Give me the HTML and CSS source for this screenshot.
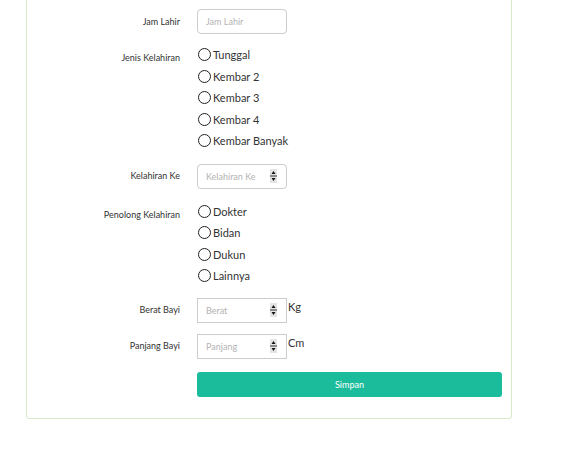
FILE: index.html
```html
<!DOCTYPE html>
<html>
<head>
<meta charset="utf-8">
<link rel="stylesheet" href="styles.css">
</head>
<body>
<div class="card">
  <form class="form">
    <div class="row row-input">
      <label class="lbl">Jam Lahir</label>
      <div class="ctl"><input class="inp rounded" type="text" placeholder="Jam Lahir"></div>
    </div>
    <div class="row row-radio g-10">
      <label class="lbl">Jenis Kelahiran</label>
      <div class="ctl radios">
        <label class="radio"><input type="radio" name="jenis"><span>Tunggal</span></label>
        <label class="radio"><input type="radio" name="jenis"><span>Kembar 2</span></label>
        <label class="radio"><input type="radio" name="jenis"><span>Kembar 3</span></label>
        <label class="radio"><input type="radio" name="jenis"><span>Kembar 4</span></label>
        <label class="radio"><input type="radio" name="jenis"><span>Kembar Banyak</span></label>
      </div>
    </div>
    <div class="row row-input g-12">
      <label class="lbl">Kelahiran Ke</label>
      <div class="ctl"><span class="num"><input class="inp rounded" type="number" placeholder="Kelahiran Ke"><svg class="spin" width="7" height="14" viewBox="0 0 7 14"><rect x="0" y="0" width="7" height="14" fill="#e4e4e4"/><path d="M3.5 2 L5.5 5 L1.5 5 Z" fill="#111"/><rect x="0" y="6.5" width="7" height="1" fill="#333"/><path d="M1.5 9 L5.5 9 L3.5 12 Z" fill="#111"/></svg></span></div>
    </div>
    <div class="row row-radio g-12">
      <label class="lbl">Penolong Kelahiran</label>
      <div class="ctl radios">
        <label class="radio"><input type="radio" name="penolong"><span>Dokter</span></label>
        <label class="radio"><input type="radio" name="penolong"><span>Bidan</span></label>
        <label class="radio"><input type="radio" name="penolong"><span>Dukun</span></label>
        <label class="radio"><input type="radio" name="penolong"><span>Lainnya</span></label>
      </div>
    </div>
    <div class="row row-input g-11">
      <label class="lbl">Berat Bayi</label>
      <div class="ctl unit"><span class="num"><input class="inp" type="number" placeholder="Berat"><svg class="spin" width="7" height="14" viewBox="0 0 7 14"><rect x="0" y="0" width="7" height="14" fill="#e4e4e4"/><path d="M3.5 2 L5.5 5 L1.5 5 Z" fill="#111"/><rect x="0" y="6.5" width="7" height="1" fill="#333"/><path d="M1.5 9 L5.5 9 L3.5 12 Z" fill="#111"/></svg></span><span class="suffix">Kg</span></div>
    </div>
    <div class="row row-input g-11">
      <label class="lbl">Panjang Bayi</label>
      <div class="ctl unit"><span class="num"><input class="inp" type="number" placeholder="Panjang"><svg class="spin" width="7" height="14" viewBox="0 0 7 14"><rect x="0" y="0" width="7" height="14" fill="#e4e4e4"/><path d="M3.5 2 L5.5 5 L1.5 5 Z" fill="#111"/><rect x="0" y="6.5" width="7" height="1" fill="#333"/><path d="M1.5 9 L5.5 9 L3.5 12 Z" fill="#111"/></svg></span><span class="suffix">Cm</span></div>
    </div>
    <div class="row g-13">
      <span></span>
      <div class="ctl"><button type="button" class="btn">Simpan</button></div>
    </div>
  </form>
</div>
</body>
</html>
```

FILE: styles.css
```css
html, body {
  margin: 0;
  padding: 0;
  background: #fff;
  font-family: Lato, "Open Sans", sans-serif;
  color: #333;
}

.card {
  margin: -10px 0 0 26px;
  width: 475px;
  border: 1px solid #d6e9c6;
  border-radius: 3px;
  padding: 18px 9px 21px 0;
}

.form {
  display: flex;
  flex-direction: column;
}

.row {
  display: grid;
  grid-template-columns: 153px 305px;
  column-gap: 17px;
  align-items: start;
}

.row-input {
  align-items: center;
}

.g-10 { margin-top: 10px; }
.g-11 { margin-top: 11px; }
.g-12 { margin-top: 12px; }
.g-13 { margin-top: 13px; }

.lbl {
  text-align: right;
  font-size: 9px;
  line-height: 12px;
  color: #333;
}

.row-radio .lbl {
  padding-top: 8px;
}

.num {
  position: relative;
  display: inline-block;
  width: 90px;
  height: 25px;
}

.spin {
  position: absolute;
  right: 10px;
  top: 5px;
}

.inp {
  box-sizing: border-box;
  display: block;
  width: 90px;
  height: 25px;
  margin: 0;
  border: 1px solid #ccc;
  border-radius: 0;
  padding: 0 6px 0 8px;
  font-family: Lato, sans-serif;
  font-size: 9px;
  color: #555;
  outline: none;
  background: #fff;
  -moz-appearance: textfield;
}

.inp::-webkit-inner-spin-button,
.inp::-webkit-outer-spin-button {
  -webkit-appearance: none;
  margin: 0;
}

.inp.rounded {
  border-radius: 4px;
}

.inp::placeholder {
  color: #b3b3b3;
}

.unit {
  display: flex;
  align-items: flex-start;
}

.suffix {
  font-size: 11px;
  line-height: 17px;
  margin-left: 1px;
  color: #333;
}

.radios {
  display: flex;
  flex-direction: column;
}

.radio {
  display: flex;
  align-items: center;
  height: 21.5px;
  font-size: 11px;
  color: #333;
}

.radio input {
  -webkit-appearance: none;
  appearance: none;
  box-sizing: border-box;
  margin: 0 2px 0 1px;
  width: 13px;
  height: 13px;
  border: 1px solid #222;
  border-radius: 50%;
  background: #fff;
}

.btn {
  display: block;
  width: 305px;
  height: 25px;
  border: none;
  border-radius: 3px;
  background: #1abc9c;
  color: #fff;
  font-family: Lato, sans-serif;
  font-size: 9px;
  cursor: pointer;
}
```
